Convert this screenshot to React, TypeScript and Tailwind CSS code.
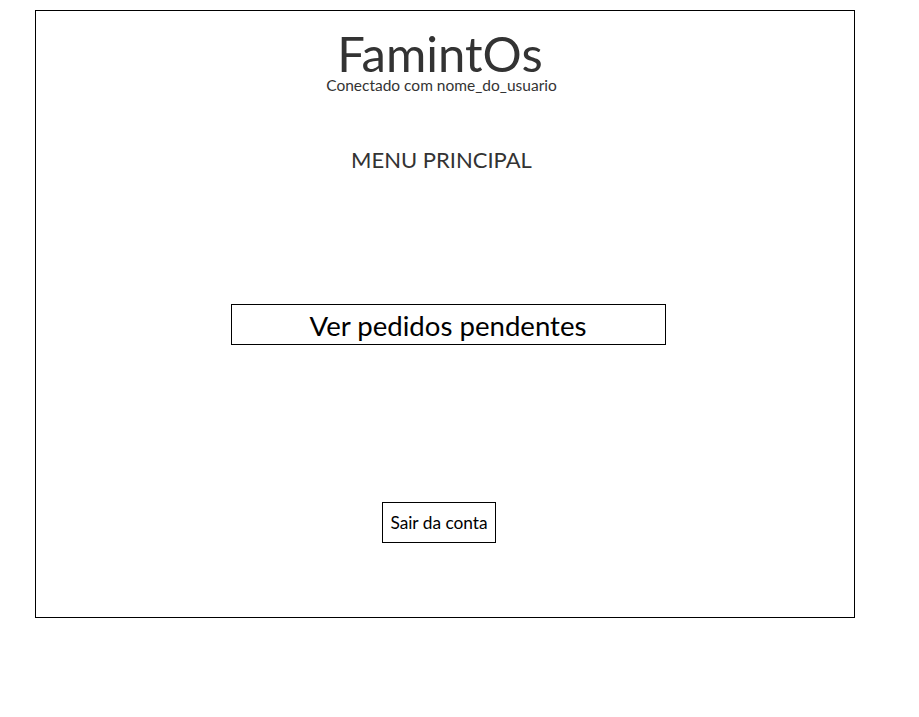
import React from "react";

export default function App() {
  return (
    <div className="w-[919px] h-[717px] bg-white" style={{ fontFamily: "Lato, 'Open Sans', sans-serif" }}>
      <div className="ml-[35px] mt-[10px] w-[820px] h-[608px] border border-black flex flex-col items-center">
        <h1 className="mt-[22px] mr-[10px] text-[49px] leading-[40px] text-[#333333]">FamintOs</h1>
        <p className="mt-[3px] mr-[7px] text-[15.5px] leading-[18px] text-[#333333]">Conectado com nome_do_usuario</p>
        <h2 className="mt-[52px] mr-[7px] text-[22px] leading-[28px] text-[#333333]">MENU PRINCIPAL</h2>
        <button className="mt-[130px] ml-[6px] w-[435px] h-[41px] border border-black text-[27.6px] text-black">
          Ver pedidos pendentes
        </button>
        <button className="mt-[157px] mr-[12px] w-[114px] h-[41px] border border-black text-[17.3px] text-black">
          Sair da conta
        </button>
      </div>
    </div>
  );
}
